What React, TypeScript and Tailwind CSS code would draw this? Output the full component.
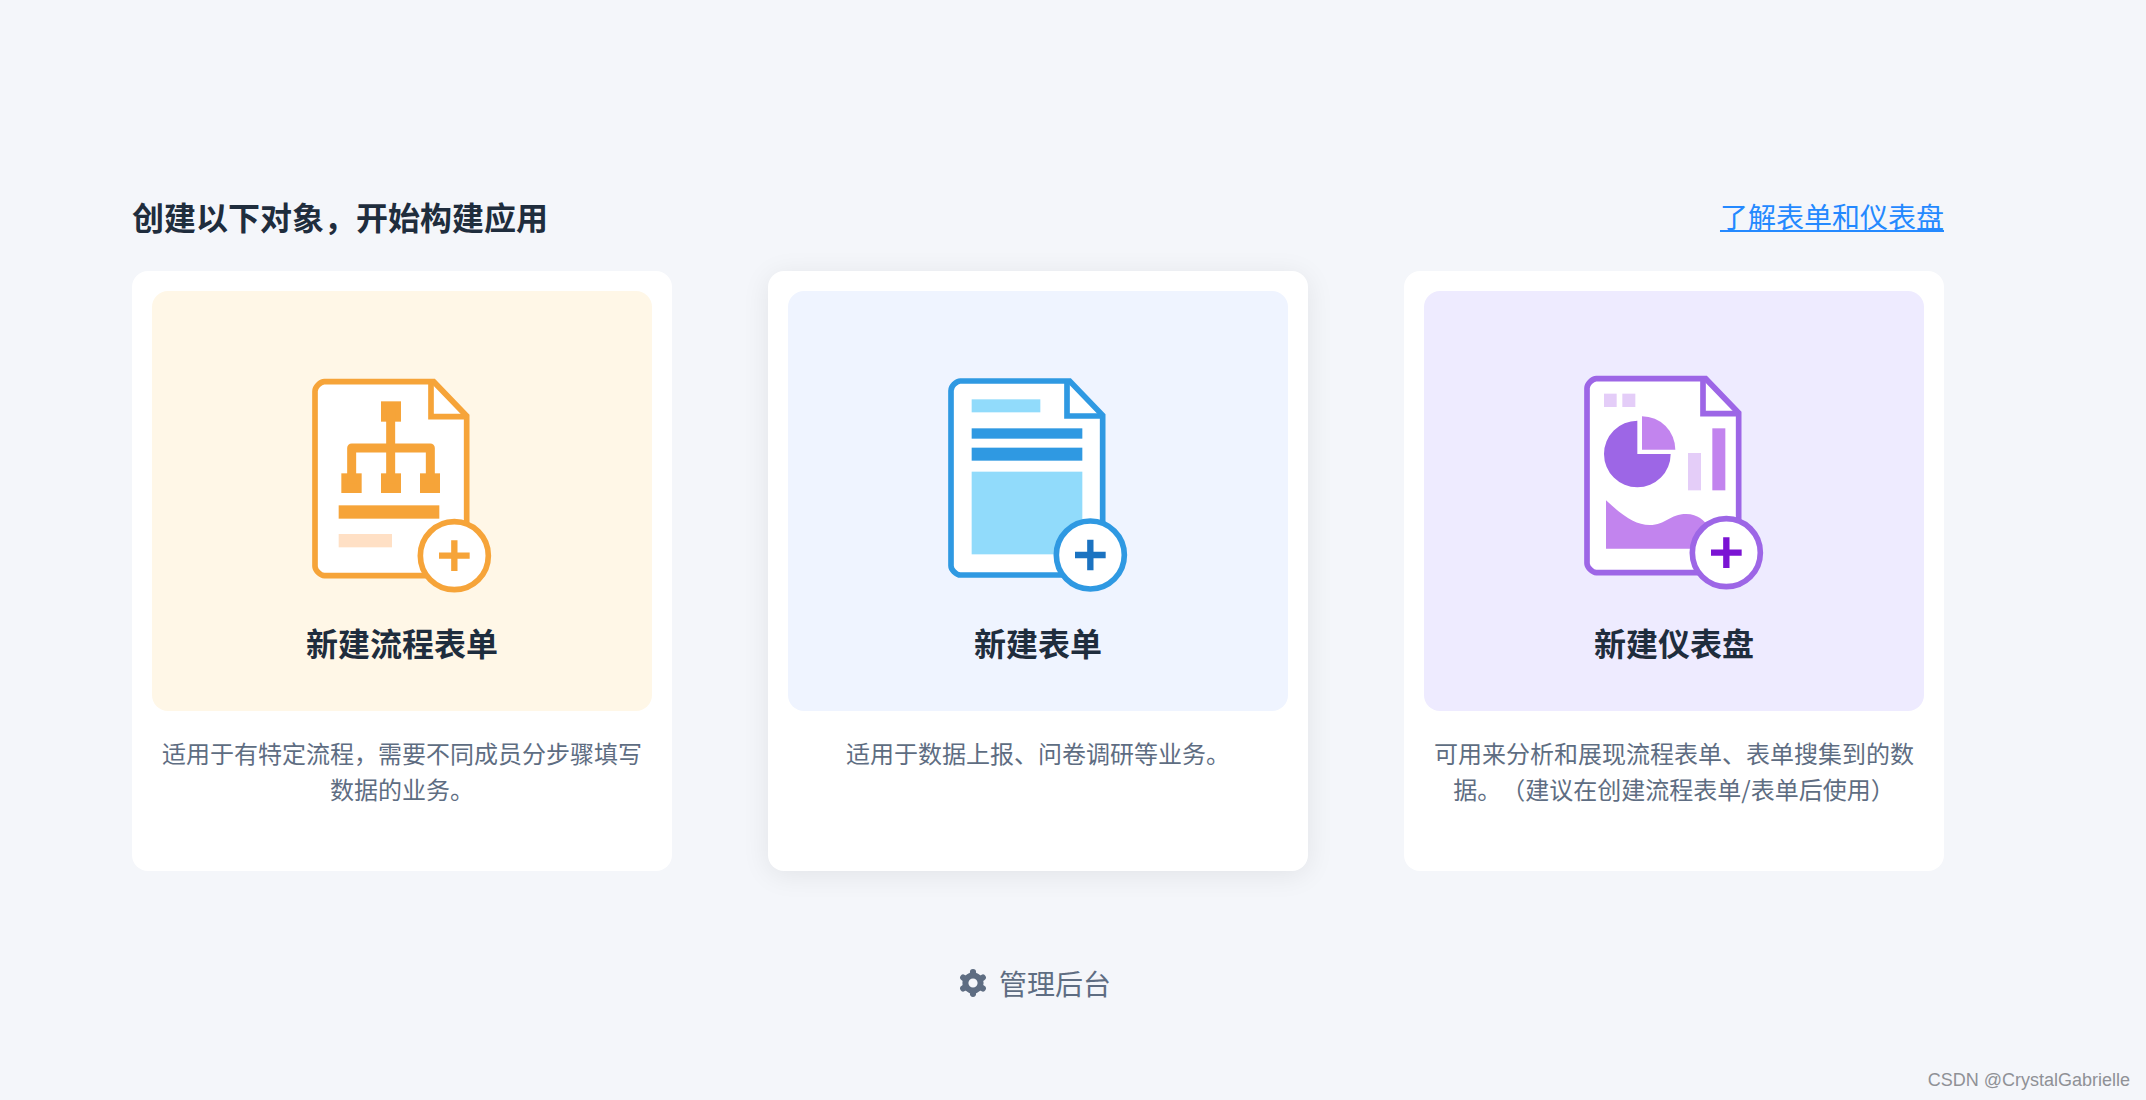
import type { ReactNode } from "react";

type DocumentIconProps = {
  color: string;
  plusColor: string;
  offset: number;
  children: ReactNode;
};

// Sheet with a folded corner and a round "+" badge, shared by all cards
function DocumentIcon({ color, plusColor, offset, children }: DocumentIconProps) {
  return (
    <svg viewBox="6 9 600 693" className="w-[200px] h-[231px]" aria-hidden="true">
      <g transform={`translate(0 ${offset})`}>
        <path
          d="M73 65H401L500 168V647H73Q64 647 54 637Q45 628 45 619V94Q45 84 54 75Q64 65 73 65Z"
          fill="#fff"
          stroke={color}
          strokeWidth="17"
        />
        <path d="M393 65V170H500" fill="none" stroke={color} strokeWidth="17" />
      </g>
      {children}
      <g transform={`translate(0 ${offset})`}>
        <circle cx="463" cy="587" r="102" fill="#fff" stroke={color} strokeWidth="17" />
        <path d="M417 587H509M463 541V633" stroke={plusColor} strokeWidth="19" />
      </g>
    </svg>
  );
}

function FlowIcon() {
  return (
    <DocumentIcon color="#f6a439" plusColor="#f6a439" offset={0}>
      <g fill="#f6a439">
        <rect x="243" y="124" width="60" height="61" />
        <rect x="124" y="340" width="61" height="59" />
        <rect x="243" y="340" width="60" height="59" />
        <rect x="360" y="340" width="60" height="59" />
        <rect x="116" y="436" width="302" height="40" />
      </g>
      <path
        d="M272 150V370M155 370V264H391V370"
        fill="none"
        stroke="#f6a439"
        strokeWidth="27"
        strokeLinejoin="round"
      />
      <rect x="116" y="522" width="160" height="40" fill="#ffe0c5" />
    </DocumentIcon>
  );
}

function FormIcon() {
  return (
    <DocumentIcon color="#2f99e2" plusColor="#1b73c1" offset={-2}>
      <g fill="#91dbfb">
        <rect x="107" y="118" width="206" height="39" />
        <rect x="107" y="335" width="332" height="248" />
      </g>
      <g fill="#2f99e2">
        <rect x="107" y="205" width="332" height="31" />
        <rect x="107" y="263" width="332" height="39" />
      </g>
    </DocumentIcon>
  );
}

function DashboardIcon() {
  return (
    <DocumentIcon color="#9d66e6" plusColor="#7b14d3" offset={-9}>
      <g fill="#e4cdf8">
        <rect x="96" y="101" width="38" height="40" />
        <rect x="151" y="101" width="39" height="40" />
        <rect x="348" y="279" width="39" height="112" />
      </g>
      <path d="M196 282V182A100 100 0 1 0 296 282Z" fill="#9d66e6" />
      <g fill="#c284ee">
        <path d="M210 269V169A100 100 0 0 1 310 269Z" />
        <rect x="421" y="205" width="39" height="186" />
        <path d="M102 421C150 466 190 495 233 495C282 495 293 462 343 462C378 462 395 482 412 500V566H102Z" />
      </g>
    </DocumentIcon>
  );
}

function GearIcon() {
  return (
    <svg viewBox="0 0 28 28" className="size-7 text-[#5e6d82]" aria-hidden="true">
      <circle cx="14" cy="14" r="7.6" fill="none" stroke="currentColor" strokeWidth="6" />
      <path
        d="M14 3.2V6M14 22V24.8M4.2 8.6L7 10.2M21 17.8L23.8 19.4M4.2 19.4L7 17.8M21 10.2L23.8 8.6"
        stroke="currentColor"
        strokeWidth="6.2"
        strokeLinecap="round"
      />
    </svg>
  );
}

const cards = [
  {
    icon: FlowIcon,
    title: "新建流程表单",
    description: "适用于有特定流程，需要不同成员分步骤填写数据的业务。",
    panel: "bg-[#fff7e7]",
    shadow: "",
  },
  {
    icon: FormIcon,
    title: "新建表单",
    description: "适用于数据上报、问卷调研等业务。",
    panel: "bg-[#eff4ff]",
    shadow: "shadow-[0_4px_28px_rgba(0,0,0,0.08)]",
  },
  {
    icon: DashboardIcon,
    title: "新建仪表盘",
    description: "可用来分析和展现流程表单、表单搜集到的数据。（建议在创建流程表单/表单后使用）",
    panel: "bg-[#eeebff]",
    shadow: "",
  },
];

export default function App() {
  return (
    <div
      lang="zh-CN"
      className="min-h-screen flex flex-col bg-[#f4f6fa] text-[#1f2d3d] font-['Noto_Sans_CJK_SC',sans-serif] [text-spacing-trim:space-all]"
    >
      <main className="pt-48 pl-[132px] pr-[202px]">
        {/* HEADER */}
        <div className="flex items-center justify-between mb-[31px]">
          <h1 className="text-[32px] leading-12 font-bold">创建以下对象，开始构建应用</h1>
          <a
            href="#"
            className="text-[28px] leading-12 text-[#2489ff] underline decoration-2 underline-offset-2 [text-decoration-skip-ink:none]"
          >
            了解表单和仪表盘
          </a>
        </div>

        {/* CARDS */}
        <div className="grid grid-cols-3 gap-24">
          {cards.map((card) => (
            <button
              key={card.title}
              type="button"
              className={`min-h-[600px] flex flex-col p-5 rounded-2xl bg-white text-center cursor-pointer ${card.shadow}`}
            >
              <span
                className={`w-full h-[420px] flex flex-col items-center pt-18 rounded-2xl ${card.panel}`}
              >
                <card.icon />
                <span className="mt-6 text-[32px] leading-12 font-bold">{card.title}</span>
              </span>
              <span className="w-full mt-6 px-2 text-2xl leading-9 text-[#5e6d82]">
                {card.description}
              </span>
            </button>
          ))}
        </div>

        {/* ADMIN */}
        <div className="flex justify-center mt-22 pr-1.5">
          <button
            type="button"
            className="flex items-center gap-3 text-[28px] leading-12 text-[#5e6d82] cursor-pointer"
          >
            <GearIcon />
            管理后台
          </button>
        </div>
      </main>

      <footer className="mt-auto pb-2 pr-4 text-right text-lg leading-6 text-[#8f9196] font-['Liberation_Sans',sans-serif]">
        CSDN @CrystalGabrielle
      </footer>
    </div>
  );
}
